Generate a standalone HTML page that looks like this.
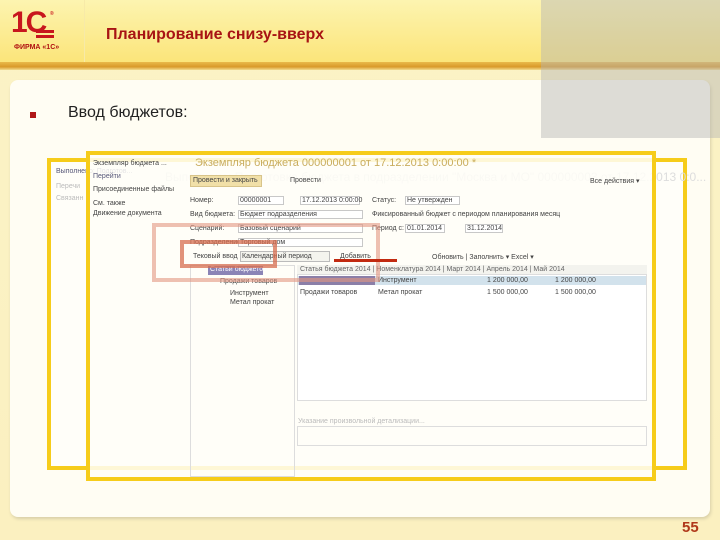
<!DOCTYPE html>
<html><head><meta charset="utf-8"><style>
*{margin:0;padding:0;box-sizing:border-box}
body{width:720px;height:540px;overflow:hidden;position:relative;font-family:"Liberation Sans",sans-serif;background:linear-gradient(#fbf3c6,#fbf0c0)}
.hdr{position:absolute;left:0;top:0;width:720px;height:62px;background:linear-gradient(#fdf4b0,#fbe57a)}
.bar{position:absolute;left:0;top:62px;width:720px;height:8px;background:linear-gradient(#e9b94a,#d99a2a 60%,#f3dc8e)}
.sep{position:absolute;left:84px;top:0;width:1px;height:62px;background:#f7eaa8}
.panel{position:absolute;left:10px;top:80px;width:700px;height:437px;background:#fffdf3;border-radius:8px;box-shadow:1px 2px 3px #d8cfa8}
.grey{position:absolute;left:541px;top:0;width:179px;height:138px;background:rgba(180,180,180,.45)}
.t{position:absolute;color:#b01010;font-weight:bold}
.a{position:absolute;font-size:7px;color:#444;white-space:nowrap}
.l{position:absolute;font-size:7px;color:#bbb;white-space:nowrap}
.fld{position:absolute;height:9px;border:1px solid #c8c8c8;background:#fff}
</style></head><body>
<div class="hdr"></div><div class="sep"></div><div class="bar"></div>
<div class="panel"></div>
<div class="t" style="left:11px;top:6px;font-size:30px;line-height:34px;color:#c8161d;letter-spacing:-2px;font-family:'Liberation Sans Narrow','Liberation Sans',sans-serif">1С</div>
<div style="position:absolute;left:36px;top:30px;width:18px;height:3px;background:#c8161d"></div>
<div style="position:absolute;left:36px;top:35px;width:18px;height:3px;background:#c8161d"></div>
<div class="t" style="left:50px;top:11px;font-size:5px;color:#c8161d">®</div>
<div class="t" style="left:14px;top:44px;font-size:7px">ФИРМА «1С»</div>
<div class="t" style="left:106px;top:26px;font-size:16px;color:#a81414">Планирование снизу-вверх</div>
<div style="position:absolute;left:30px;top:112px;width:6px;height:6px;background:#b01818"></div>
<div style="position:absolute;left:68px;top:104px;font-size:16px;color:#222">Ввод бюджетов:</div>
<div class="grey"></div>
<!-- outer frame -->
<div style="position:absolute;left:47px;top:158px;width:640px;height:312px;border:4px solid #f6cc1a;background:#fffef9"></div>
<div class="a" style="left:56px;top:168px;color:#557">Выполнено: Подготов...</div>
<div class="l" style="left:56px;top:183px">Перечи</div>
<div class="l" style="left:56px;top:195px">Связанн</div>
<div class="l" style="left:165px;top:170px;font-size:12px;color:#ddd">Выполнено: Подготовка бюджета в подразделении "Москва и МО" 000000003 от 17.12.2013 0:0...</div>
<!-- inner frame -->
<div style="position:absolute;left:86px;top:151px;width:570px;height:330px;border:4px solid #f6cc1a;background:rgba(255,254,248,.85)"></div>
<div class="a" style="left:93px;top:160px">Экземпляр бюджета ...</div>
<div class="a" style="left:93px;top:173px;color:#557">Перейти</div>
<div class="a" style="left:93px;top:186px">Присоединенные файлы</div>
<div class="a" style="left:93px;top:200px">См. также</div>
<div class="a" style="left:93px;top:210px">Движение документа</div>
<div style="position:absolute;left:195px;top:157px;font-size:11px;color:#c9ad5e">Экземпляр бюджета 000000001 от 17.12.2013 0:00:00 *</div>
<div style="position:absolute;left:190px;top:175px;width:72px;height:12px;background:#f1e0a8;border:1px solid #d8c48a"></div>
<div class="a" style="left:193px;top:177px">Провести и закрыть</div>
<div class="a" style="left:290px;top:177px">Провести</div>
<div class="a" style="left:590px;top:177px">Все действия ▾</div>
<div class="a" style="left:190px;top:197px">Номер:</div><div class="fld" style="left:238px;top:196px;width:46px"></div><div class="a" style="left:240px;top:197px">00000001</div>
<div class="fld" style="left:300px;top:196px;width:60px"></div><div class="a" style="left:302px;top:197px">17.12.2013 0:00:00</div>
<div class="a" style="left:372px;top:197px">Статус:</div><div class="fld" style="left:405px;top:196px;width:55px"></div><div class="a" style="left:407px;top:197px">Не утвержден</div>
<div class="a" style="left:190px;top:211px">Вид бюджета:</div><div class="fld" style="left:238px;top:210px;width:125px"></div><div class="a" style="left:240px;top:211px">Бюджет подразделения</div>
<div class="a" style="left:372px;top:211px">Фиксированный бюджет с периодом планирования месяц</div>
<div class="a" style="left:190px;top:225px">Сценарий:</div><div class="fld" style="left:238px;top:224px;width:125px"></div><div class="a" style="left:240px;top:225px">Базовый сценарий</div>
<div class="a" style="left:372px;top:225px">Период с:</div><div class="fld" style="left:405px;top:224px;width:40px"></div><div class="a" style="left:407px;top:225px">01.01.2014</div>
<div class="fld" style="left:465px;top:224px;width:38px"></div><div class="a" style="left:467px;top:225px">31.12.2014</div>
<div class="a" style="left:190px;top:239px">Подразделение:</div><div class="fld" style="left:238px;top:238px;width:125px"></div><div class="a" style="left:240px;top:239px">Торговый дом</div>
<div class="a" style="left:193px;top:253px">Тековый ввод</div>
<div style="position:absolute;left:240px;top:251px;width:90px;height:11px;border:1px solid #bbb;background:#f4f4ee"></div>
<div class="a" style="left:242px;top:253px">Календарный период</div>
<div class="a" style="left:340px;top:253px">Добавить</div>
<div class="a" style="left:432px;top:253px">Обновить | Заполнить ▾ Excel ▾</div>
<!-- table -->
<div style="position:absolute;left:190px;top:265px;width:105px;height:212px;border:1px solid #ddd"></div>
<div style="position:absolute;left:297px;top:265px;width:350px;height:136px;border:1px solid #ddd;background:#fff"></div>
<div style="position:absolute;left:297px;top:265px;width:350px;height:10px;background:#f3f3ee;border-bottom:1px solid #ddd"></div>
<div class="a" style="left:300px;top:266px;color:#666">Статья бюджета 2014 | Номенклатура 2014 | Март 2014 | Апрель 2014 | Май 2014</div>
<div style="position:absolute;left:298px;top:276px;width:348px;height:9px;background:#d2e2ec"></div>
<div style="position:absolute;left:299px;top:276px;width:76px;height:9px;background:#8b7fa8"></div>
<div class="a" style="left:378px;top:277px">Инструмент</div><div class="a" style="left:487px;top:277px">1 200 000,00</div><div class="a" style="left:555px;top:277px">1 200 000,00</div>
<div class="a" style="left:300px;top:289px">Продажи товаров</div><div class="a" style="left:378px;top:289px">Метал прокат</div><div class="a" style="left:487px;top:289px">1 500 000,00</div><div class="a" style="left:555px;top:289px">1 500 000,00</div>
<div style="position:absolute;left:208px;top:266px;width:55px;height:9px;background:#8b84b6"></div>
<div class="a" style="left:210px;top:266px;color:#fff">Статьи бюджетов</div>
<div class="a" style="left:220px;top:278px">Продажи товаров</div>
<div class="a" style="left:230px;top:290px">Инструмент</div>
<div class="a" style="left:230px;top:299px">Метал прокат</div>
<div class="l" style="left:298px;top:418px">Указание произвольной детализации...</div>
<div style="position:absolute;left:297px;top:426px;width:350px;height:20px;border:1px solid #ddd"></div>
<!-- red highlights -->
<div style="position:absolute;left:152px;top:223px;width:228px;height:59px;border:4px solid rgba(226,150,130,.6)"></div>
<div style="position:absolute;left:180px;top:240px;width:97px;height:28px;border:4px solid rgba(215,110,80,.75)"></div>
<div style="position:absolute;left:334px;top:259px;width:63px;height:3px;background:#c22a10"></div>
<div style="position:absolute;left:682px;top:519px;font-size:15px;font-weight:bold;color:#b0381a">55</div>
</body></html>
